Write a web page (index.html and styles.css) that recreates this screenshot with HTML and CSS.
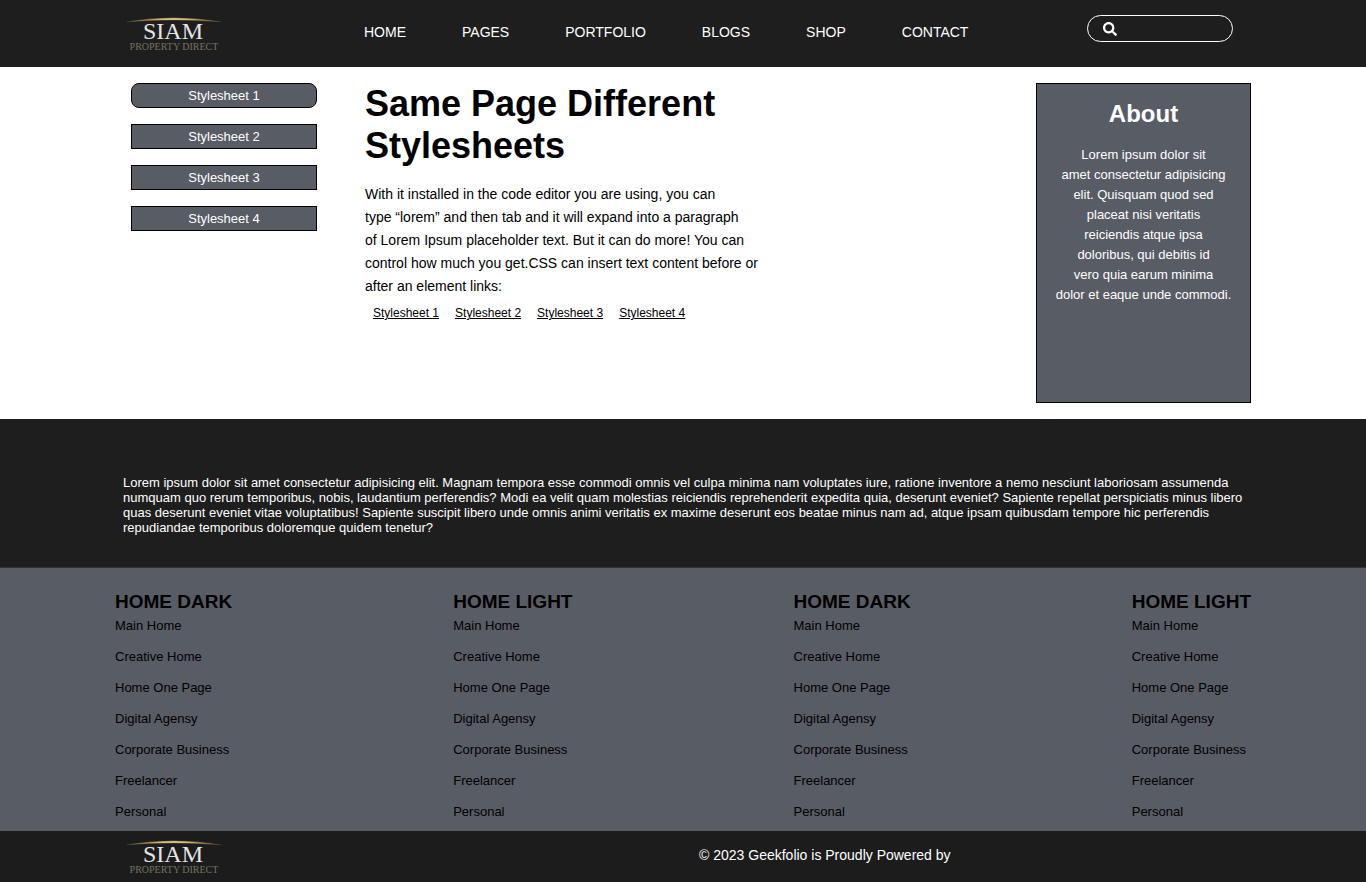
FILE: index.html
```html
<!DOCTYPE html>
<html lang="en">
<head>
<meta charset="utf-8">
<meta name="viewport" content="width=device-width, initial-scale=1">
<title>Siam Property Direct</title>
<link rel="stylesheet" href="styles.css">
</head>
<body>
<svg width="0" height="0" class="defs" aria-hidden="true">
  <defs>
    <linearGradient id="gold" x1="0" x2="1" y1="0" y2="0">
      <stop offset="0" stop-color="#8a7440" stop-opacity=".3"/>
      <stop offset=".25" stop-color="#b99a58"/>
      <stop offset=".5" stop-color="#f0dc96"/>
      <stop offset=".75" stop-color="#b99a58"/>
      <stop offset="1" stop-color="#8a7440" stop-opacity=".3"/>
    </linearGradient>
    <symbol id="logo" viewBox="0 0 104 40">
      <path d="M4 6.800Q50 -.5 98 6.800Q50 2.500 4 6.800Z" fill="url(#gold)" stroke="url(#gold)" stroke-width=".5"/>
      <text x="50" y="24" text-anchor="middle" class="logo-name">SIAM</text>
      <text x="51" y="35" text-anchor="middle" class="logo-sub">PROPERTY DIRECT</text>
    </symbol>
  </defs>
</svg>

<header class="site-header">
  <a class="brand" href="#"><svg class="logo" role="img" aria-label="Siam Property Direct"><use href="#logo"/></svg></a>
  <nav class="main-nav">
    <a href="#">HOME</a>
    <a href="#">PAGES</a>
    <a href="#">PORTFOLIO</a>
    <a href="#">BLOGS</a>
    <a href="#">SHOP</a>
    <a href="#">CONTACT</a>
  </nav>
  <form class="search" role="search">
    <svg class="search-icon" viewBox="0 0 512 512" aria-hidden="true"><path fill="currentColor" d="M505 442.700L405.300 343c-4.500-4.500-10.600-7-17-7H372c27.600-35.300 44-79.700 44-128C416 93.100 322.900 0 208 0S0 93.100 0 208s93.100 208 208 208c48.300 0 92.700-16.400 128-44v16.300c0 6.400 2.500 12.500 7 17l99.700 99.700c9.400 9.400 24.600 9.400 33.900 0l28.300-28.300c9.400-9.400 9.400-24.600.1-34zM208 336c-70.700 0-128-57.200-128-128 0-70.700 57.200-128 128-128 70.700 0 128 57.200 128 128 0 70.700-57.200 128-128 128z"/></svg>
    <input type="search" aria-label="Search">
  </form>
</header>

<main class="content">
  <aside class="switcher">
    <button type="button" class="switch rounded">Stylesheet 1</button>
    <button type="button" class="switch">Stylesheet 2</button>
    <button type="button" class="switch">Stylesheet 3</button>
    <button type="button" class="switch">Stylesheet 4</button>
  </aside>
  <article class="intro">
    <h1>Same Page Different<br>Stylesheets</h1>
    <p>With it installed in the code editor you are using, you can<br>type “lorem” and then tab and it will expand into a paragraph<br>of Lorem Ipsum placeholder text. But it can do more! You can<br>control how much you get.CSS can insert text content before or<br>after an element links:</p>
    <nav class="sheet-links">
      <a href="#">Stylesheet 1</a>
      <a href="#">Stylesheet 2</a>
      <a href="#">Stylesheet 3</a>
      <a href="#">Stylesheet 4</a>
    </nav>
  </article>
  <aside class="about">
    <h2>About</h2>
    <p>Lorem ipsum dolor sit<br>amet consectetur adipisicing<br>elit. Quisquam quod sed<br>placeat nisi veritatis<br>reiciendis atque ipsa<br>doloribus, qui debitis id<br>vero quia earum minima<br>dolor et eaque unde commodi.</p>
  </aside>
</main>

<section class="band">
  <p>Lorem ipsum dolor sit amet consectetur adipisicing elit. Magnam tempora esse commodi omnis vel culpa minima nam voluptates iure, ratione inventore a nemo nesciunt laboriosam assumenda numquam quo rerum temporibus, nobis, laudantium perferendis? Modi ea velit quam molestias reiciendis reprehenderit expedita quia, deserunt eveniet? Sapiente repellat perspiciatis minus libero quas deserunt eveniet vitae voluptatibus! Sapiente suscipit libero unde omnis animi veritatis ex maxime deserunt eos beatae minus nam ad, atque ipsam quibusdam tempore hic perferendis repudiandae temporibus doloremque quidem tenetur?</p>
</section>

<footer>
  <div class="link-columns">
    <section><h3>HOME DARK</h3><ul><li><a href="#">Main Home</a></li><li><a href="#">Creative Home</a></li><li><a href="#">Home One Page</a></li><li><a href="#">Digital Agensy</a></li><li><a href="#">Corporate Business</a></li><li><a href="#">Freelancer</a></li><li><a href="#">Personal</a></li></ul></section>
    <section><h3>HOME LIGHT</h3><ul><li><a href="#">Main Home</a></li><li><a href="#">Creative Home</a></li><li><a href="#">Home One Page</a></li><li><a href="#">Digital Agensy</a></li><li><a href="#">Corporate Business</a></li><li><a href="#">Freelancer</a></li><li><a href="#">Personal</a></li></ul></section>
    <section><h3>HOME DARK</h3><ul><li><a href="#">Main Home</a></li><li><a href="#">Creative Home</a></li><li><a href="#">Home One Page</a></li><li><a href="#">Digital Agensy</a></li><li><a href="#">Corporate Business</a></li><li><a href="#">Freelancer</a></li><li><a href="#">Personal</a></li></ul></section>
    <section><h3>HOME LIGHT</h3><ul><li><a href="#">Main Home</a></li><li><a href="#">Creative Home</a></li><li><a href="#">Home One Page</a></li><li><a href="#">Digital Agensy</a></li><li><a href="#">Corporate Business</a></li><li><a href="#">Freelancer</a></li><li><a href="#">Personal</a></li></ul></section>
  </div>
  <div class="legal">
    <a href="#"><svg class="logo" role="img" aria-label="Siam Property Direct"><use href="#logo"/></svg></a>
    <p>© 2023 Geekfolio is Proudly Powered by</p>
  </div>
</footer>
</body>
</html>
```
FILE: styles.css
```css
* {
  box-sizing: border-box;
  margin: 0;
  padding: 0;
}

body {
  font-family: "Liberation Sans", Arial, sans-serif;
  color: #000;
  background: #fff;
}

a {
  color: inherit;
  text-decoration: none;
}

ul {
  list-style: none;
}

.defs {
  position: absolute;
}

.logo {
  display: block;
  width: 104px;
  height: 40px;
}

.logo-name {
  font: 24px "Liberation Serif", "Times New Roman", serif;
  fill: #e4e4e4;
}

.logo-sub {
  font: 10px "Liberation Serif", "Times New Roman", serif;
  fill: #7a715d;
}

.site-header {
  display: flex;
  align-items: flex-start;
  padding: 15px 133px 12px 123px;
  background: #1e1e1e;
  color: #fff;
}

.brand {
  flex: 0 0 241px;
}

.main-nav {
  display: flex;
  gap: 56px;
  padding-top: 8px;
  font-size: 14px;
  line-height: 18px;
}

.search {
  display: flex;
  align-items: center;
  gap: 8px;
  width: 146px;
  height: 27px;
  margin-left: auto;
  padding: 0 15px;
  border: 1px solid #fff;
  border-radius: 14px;
}

.search-icon {
  flex: none;
  width: 14px;
  height: 14px;
}

.search input {
  flex: 1;
  min-width: 0;
  border: 0;
  outline: 0;
  background: transparent;
  color: inherit;
  font: inherit;
}

.content {
  display: flex;
  align-items: flex-start;
  padding: 16px 115px 16px 131px;
}

.switcher {
  display: grid;
  flex: 0 0 186px;
  gap: 16px;
}

.switch {
  height: 25px;
  border: 1px solid #000;
  background: #585c65;
  color: #fff;
  font: 13px "Liberation Sans", Arial, sans-serif;
}

.rounded {
  border-radius: 8px;
}

.intro {
  flex: 1;
  padding-left: 48px;
}

.intro h1 {
  font-size: 36px;
  line-height: 42px;
}

.intro p {
  margin-top: 16px;
  font-size: 14px;
  line-height: 23px;
}

.sheet-links {
  display: flex;
  gap: 16px;
  padding: 8px 8px 0;
  font-size: 12px;
  line-height: 14px;
}

.sheet-links a {
  text-decoration: underline;
}

.about {
  flex: 0 0 215px;
  min-height: 320px;
  padding: 16px;
  border: 1px solid #000;
  background: #585c65;
  color: #fff;
  text-align: center;
}

.about h2 {
  font-size: 24px;
  line-height: 28px;
}

.about p {
  margin: 17px -16px 0;
  font-size: 13px;
  line-height: 20px;
}

.band {
  padding: 56px 123px 32px;
  border-bottom: 1px solid #333;
  background: #1e1e1e;
  color: #fff;
  font-size: 13px;
  line-height: 15px;
}

.link-columns {
  display: flex;
  justify-content: space-between;
  padding: 23px 115px 12px;
  background: #585c65;
}

.link-columns h3 {
  font-size: 19px;
  line-height: 22px;
}

.link-columns ul {
  display: grid;
  gap: 16px;
  padding-top: 5px;
  font-size: 13px;
  line-height: 15px;
}

.legal {
  display: grid;
  grid-template-columns: 1fr 1fr;
  align-items: start;
  padding: 7px 123px 4px;
  background: #1c1c1c;
  color: #fff;
}

.legal p {
  padding: 9px 0 0 16px;
  font-size: 14px;
  line-height: 16px;
}
```
